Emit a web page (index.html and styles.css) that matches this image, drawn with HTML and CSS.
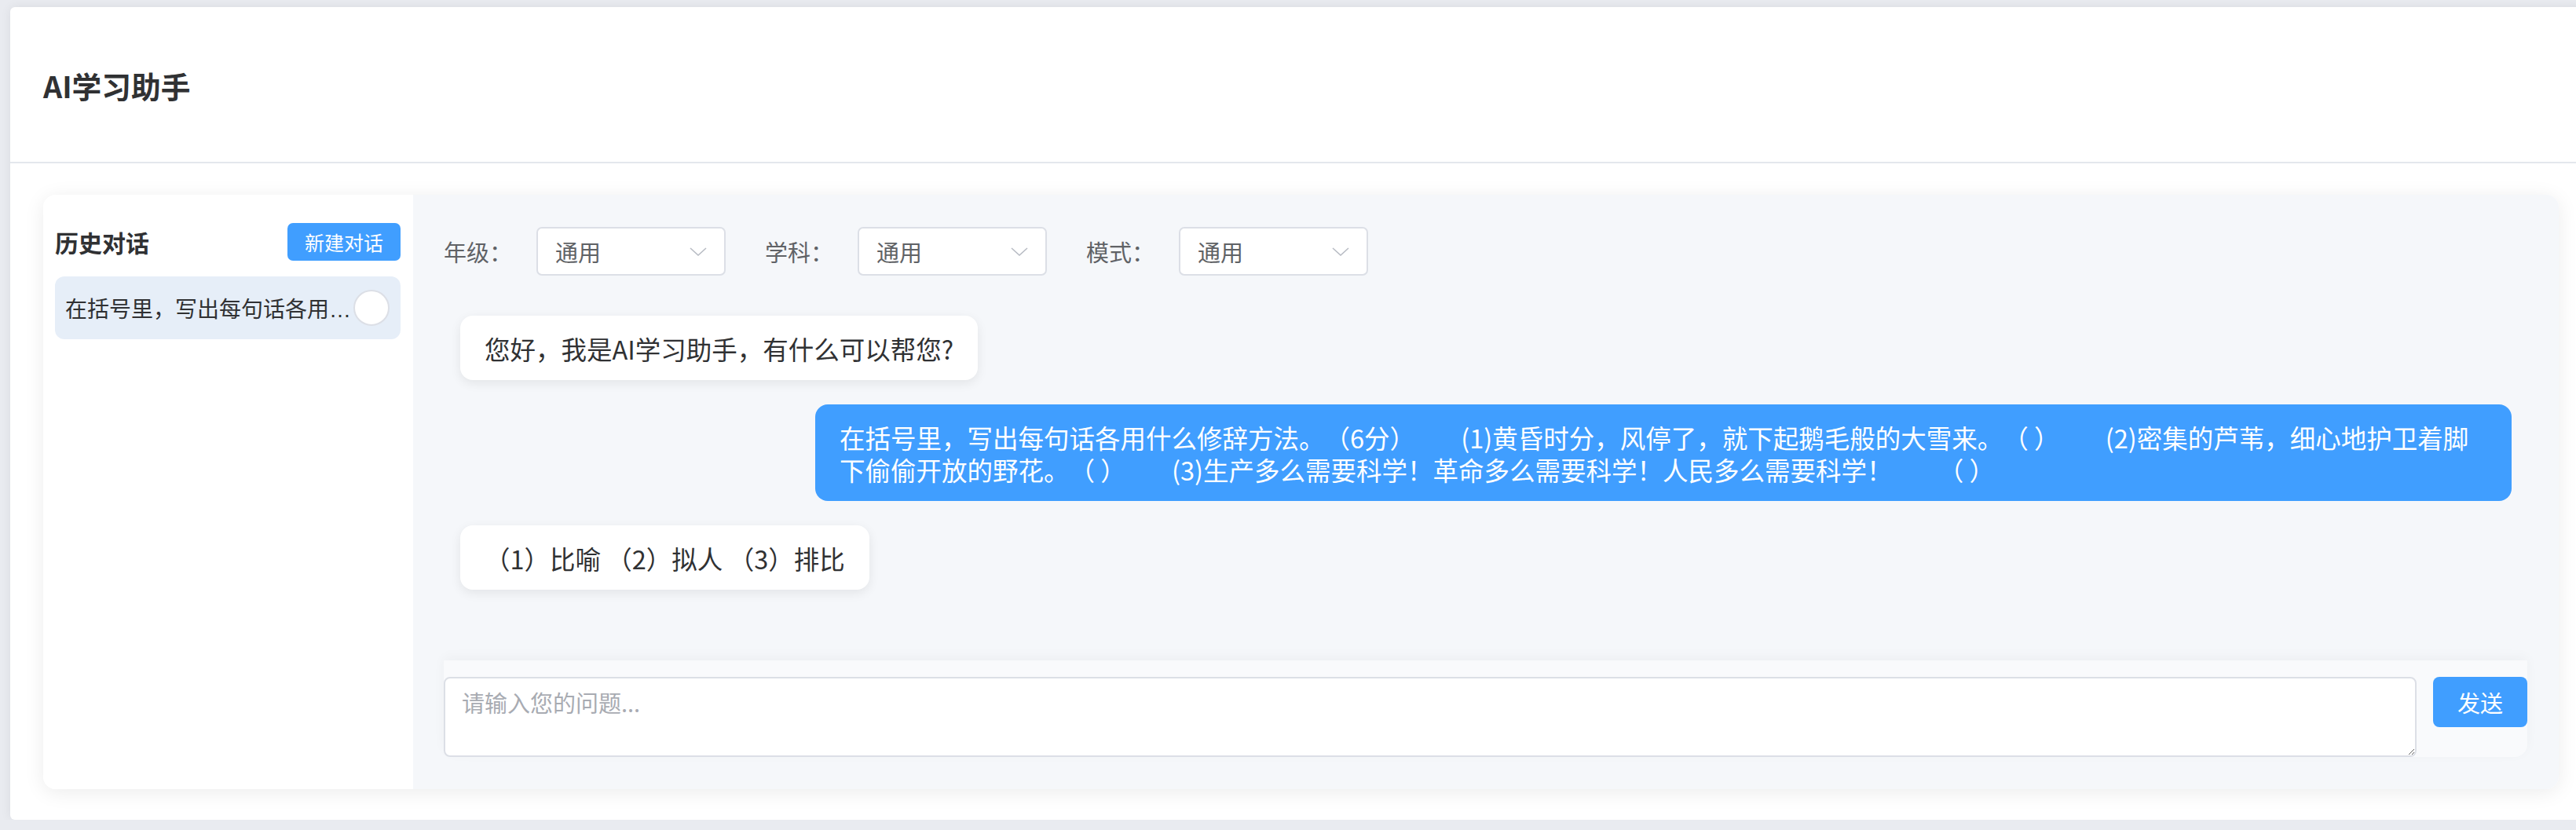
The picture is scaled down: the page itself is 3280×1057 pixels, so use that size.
FILE: index.html
```html
<!DOCTYPE html>
<html lang="zh-CN">
<head>
<meta charset="utf-8">
<title>AI学习助手</title>
<link rel="stylesheet" href="styles.css">
</head>
<body>
<div class="app">
  <header class="app-header">
    <h1 class="app-title">AI学习助手</h1>
  </header>
  <main class="app-main">
    <div class="layout">
      <aside class="sidebar">
        <div class="sidebar-head">
          <h3 class="sidebar-title">历史对话</h3>
          <button class="btn btn-small">新建对话</button>
        </div>
        <ul class="history">
          <li class="history-item active">
            <span class="history-text">在括号里，写出每句话各用什么修辞方法。（6分）</span>
            <span class="history-del"></span>
          </li>
        </ul>
      </aside>
      <section class="chat">
        <div class="toolbar">
          <div class="field">
            <span class="field-label">年级：</span>
            <div class="select"><span class="select-value">通用</span><svg class="select-arrow" viewBox="0 0 22 11"><polyline points="1,1 11,10 21,1"/></svg></div>
          </div>
          <div class="field">
            <span class="field-label">学科：</span>
            <div class="select"><span class="select-value">通用</span><svg class="select-arrow" viewBox="0 0 22 11"><polyline points="1,1 11,10 21,1"/></svg></div>
          </div>
          <div class="field">
            <span class="field-label">模式：</span>
            <div class="select"><span class="select-value">通用</span><svg class="select-arrow" viewBox="0 0 22 11"><polyline points="1,1 11,10 21,1"/></svg></div>
          </div>
        </div>
        <div class="messages">
          <div class="msg msg-ai">您好，我是AI学习助手，有什么可以帮您?</div>
          <div class="msg msg-user">在括号里，写出每句话各用什么修辞方法。（6分）        (1)黄昏时分，风停了，就下起鹅毛般的大雪来。（ ）        (2)密集的芦苇，细心地护卫着脚下偷偷开放的野花。（ ）        (3)生产多么需要科学！革命多么需要科学！人民多么需要科学！        （ ）</div>
          <div class="msg msg-ai">（1）比喻 （2）拟人 （3）排比</div>
        </div>
        <div class="composer">
          <textarea class="composer-input" placeholder="请输入您的问题..."></textarea>
          <button class="btn btn-send">发送</button>
        </div>
      </section>
    </div>
  </main>
</div>
</body>
</html>
```

FILE: styles.css
```css
* { box-sizing: border-box; }

html, body {
  margin: 0;
  padding: 0;
  overflow: hidden;
}

body {
  background: #e9ebf0;
  font-family: "Noto Sans CJK SC", "Noto Sans", sans-serif;
  color: #303133;
  text-spacing-trim: space-all;
}

.app {
  margin: 9px 0 0 13px;
  width: 3287px;
  height: 1035px;
  background: #fff;
  border-radius: 6px;
  box-shadow: 0 0 14px rgba(0, 0, 0, 0.07);
  display: flex;
  flex-direction: column;
}

.app-header {
  height: 199px;
  flex: none;
  border-bottom: 2px solid #e4e7ed;
  display: flex;
  align-items: center;
  padding: 2px 42px 0;
}

.app-title {
  margin: 0;
  font-size: 37.7px;
  font-weight: 700;
  color: #303133;
}

.app-main {
  flex: 1;
  padding: 40px 42px 39px;
  display: flex;
  min-height: 0;
}

.layout {
  flex: 1;
  display: flex;
  border-radius: 16px;
  overflow: hidden;
  box-shadow: 0 4px 26px rgba(0, 0, 0, 0.08);
}

/* sidebar */
.sidebar {
  width: 471px;
  flex: none;
  background: #fff;
  padding: 36px 16px 0 15px;
}

.sidebar-head {
  display: flex;
  align-items: center;
  justify-content: space-between;
  height: 48px;
}

.sidebar-title {
  margin: 0;
  font-size: 30px;
  font-weight: 700;
  color: #303133;
  line-height: 1;
}

.btn {
  border: none;
  background: #409eff;
  color: #fff;
  font-family: "Noto Sans CJK SC", "Noto Sans", sans-serif;
  cursor: pointer;
  padding: 0;
}

.btn-small {
  width: 144px;
  height: 48px;
  font-size: 25px;
  border-radius: 7px;
}

.history {
  list-style: none;
  margin: 20px 0 0;
  padding: 0;
}

.history-item {
  height: 80px;
  display: flex;
  align-items: center;
  padding: 0 14px 0 13px;
  border-radius: 12px;
}

.history-item.active {
  background: #e6eef8;
}

.history-text {
  flex: 1;
  min-width: 0;
  white-space: nowrap;
  overflow: hidden;
  text-overflow: ellipsis;
  font-family: "Liberation Sans", "Noto Sans CJK SC", sans-serif;
  font-size: 28px;
  color: #303133;
}

.history-del {
  flex: none;
  width: 46px;
  height: 46px;
  border-radius: 50%;
  background: #fff;
  border: 2px solid #dcdfe6;
  margin-left: 2px;
}

/* chat */
.chat {
  flex: 1;
  min-width: 0;
  background: #f5f7fa;
  padding: 41px 40px 41px 39px;
  display: flex;
  flex-direction: column;
}

.toolbar {
  display: flex;
  align-items: center;
  gap: 50px;
  height: 62px;
  flex: none;
}

.field {
  display: flex;
  align-items: center;
}

.field-label {
  font-size: 29px;
  color: #606266;
  width: 118px;
}

.select {
  width: 241px;
  height: 62px;
  background: #fff;
  border: 2px solid #dcdfe6;
  border-radius: 7px;
  display: flex;
  align-items: center;
  justify-content: space-between;
  padding: 0 22px 0 22px;
}

.select-value {
  font-size: 29px;
  color: #606266;
}

.select-arrow {
  width: 22px;
  height: 11px;
  fill: none;
  stroke: #b8bcc4;
  stroke-width: 1.6;
}

.messages {
  flex: 1;
  min-height: 0;
  display: flex;
  flex-direction: column;
  gap: 31px;
  padding: 51px 20px 0 21px;
}

.msg {
  font-size: 32.5px;
  line-height: 41px;
  padding: 20.5px 31px;
  border-radius: 16px;
  max-width: 2160px;
  white-space: pre-wrap;
}

.msg-ai {
  align-self: flex-start;
  background: #fff;
  color: #303133;
  box-shadow: 0 4px 14px rgba(0, 0, 0, 0.08);
}

.msg-user {
  align-self: flex-end;
  background: #409eff;
  color: #fff;
}

.composer {
  flex: none;
  display: flex;
  align-items: flex-start;
  gap: 21px;
  padding: 21px 0 0 0;
  height: 123px;
  background: #f9fafc;
  border-radius: 0 0 16px 16px;
  box-shadow: 0 -4px 16px rgba(0, 0, 0, 0.035);
}

.composer-input {
  flex: 1;
  height: 102px;
  border: 2px solid #dcdfe6;
  border-radius: 8px;
  background: #fff;
  padding: 9px 21px;
  font-family: "Noto Sans CJK SC", "Noto Sans", sans-serif;
  font-size: 29px;
  line-height: 1.5;
  color: #606266;
  outline: none;
}

.composer-input::placeholder {
  color: #a8abb2;
}

.btn-send {
  width: 120px;
  height: 64px;
  font-size: 29px;
  border-radius: 8px;
  flex: none;
}
```
